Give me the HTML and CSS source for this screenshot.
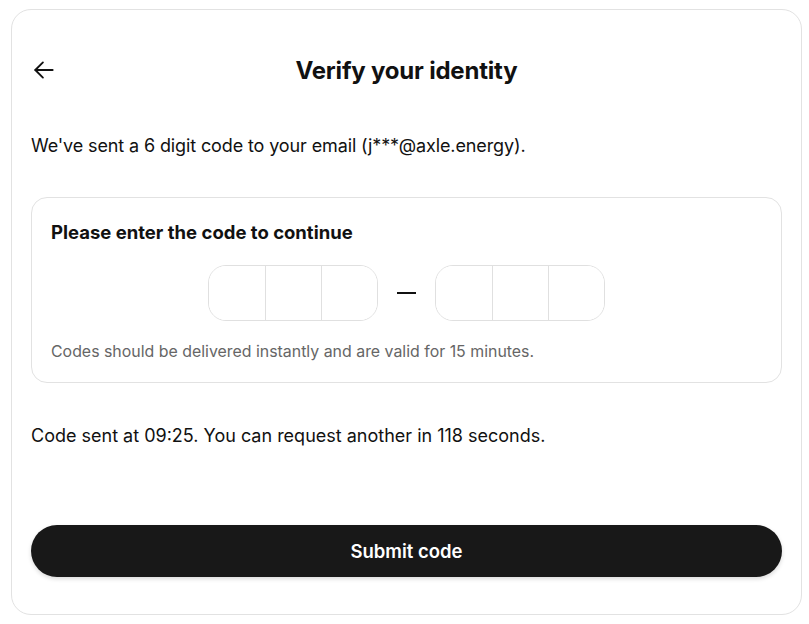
FILE: index.html
```html
<!DOCTYPE html>
<html lang="en">
<head>
<meta charset="utf-8">
<title>Verify your identity</title>
<link rel="stylesheet" href="styles.css">
</head>
<body>
<main class="card">
  <header class="header">
    <button class="back" aria-label="Back">
      <svg width="26" height="26" viewBox="0 0 24 24" fill="none" stroke="#111" stroke-width="1.7" stroke-linecap="round" stroke-linejoin="round"><path d="M20 12H4"/><path d="M11 5l-7 7 7 7"/></svg>
    </button>
    <h1 class="title">Verify your identity</h1>
  </header>
  <p class="intro">We've sent a 6 digit code to your email (j***@axle.energy).</p>
  <section class="box">
    <h2 class="box-title">Please enter the code to continue</h2>
    <div class="code-row">
      <div class="group">
        <input class="cell" maxlength="1" aria-label="Digit 1">
        <input class="cell" maxlength="1" aria-label="Digit 2">
        <input class="cell" maxlength="1" aria-label="Digit 3">
      </div>
      <span class="dash"></span>
      <div class="group">
        <input class="cell" maxlength="1" aria-label="Digit 4">
        <input class="cell" maxlength="1" aria-label="Digit 5">
        <input class="cell" maxlength="1" aria-label="Digit 6">
      </div>
    </div>
    <p class="hint">Codes should be delivered instantly and are valid for 15 minutes.</p>
  </section>
  <p class="status">Code sent at 09:25. You can request another in 118 seconds.</p>
  <button class="submit">Submit code</button>
</main>
</body>
</html>
```
FILE: styles.css
```css
* { box-sizing: border-box; }
html, body { margin: 0; background: #fff; }
body {
  font-family: Inter, "Noto Sans", "Liberation Sans", sans-serif;
  color: #111;
  padding: 9px 7px 9px 11px;
}
.card {
  width: 791px;
  border: 1px solid #e2e2e2;
  border-radius: 20px;
  padding: 38px 19px 37px;
  display: flex;
  flex-direction: column;
}
.header {
  position: relative;
  height: 44px;
  display: flex;
  align-items: center;
  justify-content: center;
}
.back {
  position: absolute;
  left: 0;
  top: 9px;
  padding: 0;
  border: 0;
  background: none;
  display: flex;
}
.title {
  margin: 0;
  font-size: 24px;
  font-weight: 700;
  letter-spacing: -0.2px;
}
.intro {
  margin: 42px 0 0;
  font-size: 18px;
  letter-spacing: -0.12px;
  line-height: 24px;
}
.box {
  margin-top: 39px;
  border: 1px solid #e2e2e2;
  border-radius: 16px;
  padding: 22px 19px 20px;
}
.box-title {
  margin: 0;
  font-size: 18.5px;
  line-height: 24px;
  font-weight: 700;
}
.code-row {
  margin-top: 21px;
  display: flex;
  align-items: center;
  justify-content: center;
  gap: 19px;
}
.group {
  display: flex;
  border: 1px solid #e0e0e0;
  border-radius: 18px;
  overflow: hidden;
}
.cell {
  width: 56px;
  height: 54px;
  border: 0;
  border-left: 1px solid #e0e0e0;
  padding: 0;
  font: inherit;
  text-align: center;
  outline: none;
  background: #fff;
}
.cell:first-child { border-left: 0; }
.dash {
  width: 19px;
  height: 2px;
  background: #111;
}
.hint {
  margin: 21px 0 0;
  font-size: 15.9px;
  line-height: 20px;
  color: #666;
}
.status {
  margin: 41px 0 0;
  font-size: 18px;
  line-height: 24px;
}
.submit {
  margin-top: 77px;
  height: 52px;
  border: 0;
  border-radius: 26px;
  background: #181818;
  color: #fff;
  font: inherit;
  font-size: 18.5px;
  font-weight: 600;
  box-shadow: 0 2px 4px rgba(0,0,0,0.15);
}
```
